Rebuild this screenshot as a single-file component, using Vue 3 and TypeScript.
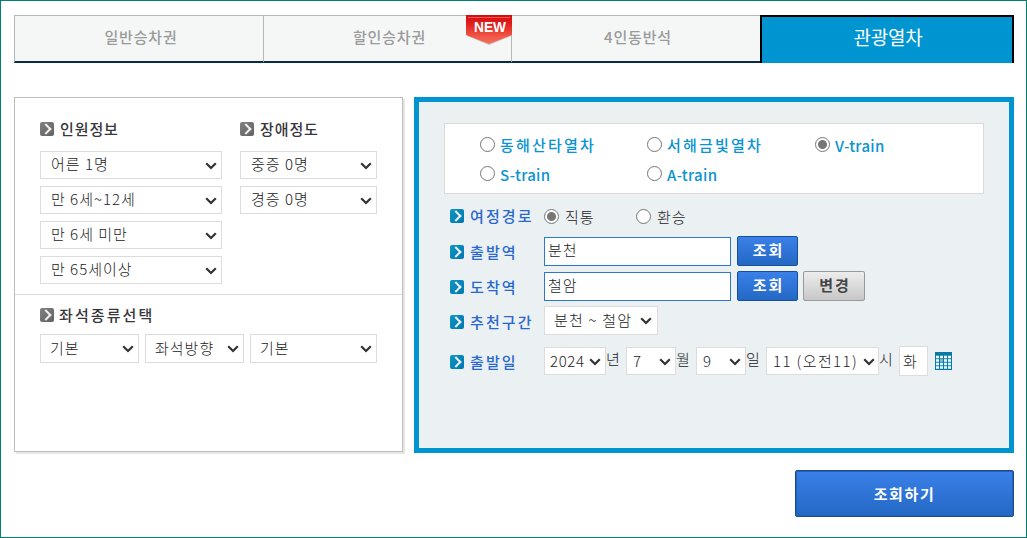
<script setup lang="ts">
import { ref } from 'vue'

const tabs = ['일반승차권', '할인승차권', '4인동반석', '관광열차']
const passengers = ['어른 1명', '만 6세~12세', '만 6세 미만', '만 65세이상']
const disability = ['중증 0명', '경증 0명']
const seats = ['기본', '좌석방향', '기본']
const trains = ['동해산타열차', '서해금빛열차', 'V-train', 'S-train', 'A-train']
const train = ref('V-train')
const route = ref('직통')
const dates = [
  { value: '2024', unit: '년', cls: 'year' },
  { value: '7', unit: '월', cls: 'month' },
  { value: '9', unit: '일', cls: 'day' },
  { value: '11 (오전11)', unit: '시', cls: 'hour' },
]
</script>

<template>
  <main class="page">
    <nav class="tabs">
      <a v-for="(t, i) in tabs" :key="t" class="tab" :class="{ active: i === 3 }">
        <span>{{ t }}</span>
        <svg v-if="i === 1" class="badge" width="46" height="31" viewBox="0 0 46 31">
          <defs>
            <linearGradient id="red" x2="0" y2="1">
              <stop offset="0" stop-color="#d60d10" />
              <stop offset=".3" stop-color="#df1e1e" />
              <stop offset=".7" stop-color="#f05243" />
              <stop offset="1" stop-color="#f8705d" />
            </linearGradient>
          </defs>
          <path d="M1 1h44v20L23 30 1 21z" fill="#999" opacity=".5" />
          <path d="M0 0h46v20L23 29 0 20z" fill="url(#red)" />
          <path d="M2 2.5h42" stroke="#ee5a50" />
          <text x="8" y="17" textLength="32" lengthAdjust="spacingAndGlyphs">NEW</text>
        </svg>
      </a>
    </nav>

    <div class="panels">
      <section class="left">
        <div class="people">
          <div class="col wide">
            <h2><i class="mark" /><span>인원정보</span></h2>
            <div v-for="p in passengers" :key="p" class="select"><span>{{ p }}</span><svg class="chev" viewBox="0 0 12 8"><path d="M1.2 1.2 6 6l4.8-4.8" /></svg></div>
          </div>
          <div class="col narrow">
            <h2><i class="mark" /><span>장애정도</span></h2>
            <div v-for="p in disability" :key="p" class="select"><span>{{ p }}</span><svg class="chev" viewBox="0 0 12 8"><path d="M1.2 1.2 6 6l4.8-4.8" /></svg></div>
          </div>
        </div>
        <div class="seating">
          <h2 class="loose"><i class="mark" /><span>좌석종류선택</span></h2>
          <div class="seats">
            <div v-for="(s, i) in seats" :key="i" class="select"><span>{{ s }}</span><svg class="chev" viewBox="0 0 12 8"><path d="M1.2 1.2 6 6l4.8-4.8" /></svg></div>
          </div>
        </div>
      </section>

      <section class="right">
        <div class="trains">
          <label v-for="t in trains" :key="t" :class="{ latin: t.includes('train') }">
            <i class="radio" :class="{ on: train === t }" @click="train = t" /><span>{{ t }}</span>
          </label>
        </div>

        <div class="row route">
          <div class="label"><i class="mark blue" /><span>여정경로</span></div>
          <label v-for="r in ['직통', '환승']" :key="r" class="way"><i class="radio" :class="{ on: route === r }" @click="route = r" /><span>{{ r }}</span></label>
        </div>
        <div class="row">
          <div class="label"><i class="mark blue" /><span>출발역</span></div>
          <div class="input"><span>분천</span></div>
          <button class="btn"><span>조회</span></button>
        </div>
        <div class="row">
          <div class="label"><i class="mark blue" /><span>도착역</span></div>
          <div class="input"><span>철암</span></div>
          <button class="btn"><span>조회</span></button>
          <button class="btn gray"><span>변경</span></button>
        </div>
        <div class="row">
          <div class="label"><i class="mark blue" /><span>추천구간</span></div>
          <div class="select section"><span>분천 ~ 철암</span><svg class="chev" viewBox="0 0 12 8"><path d="M1.2 1.2 6 6l4.8-4.8" /></svg></div>
        </div>
        <div class="row date">
          <div class="label"><i class="mark blue" /><span>출발일</span></div>
          <template v-for="d in dates" :key="d.unit">
            <div class="select" :class="d.cls"><span>{{ d.value }}</span><svg class="chev" viewBox="0 0 12 8"><path d="M1.2 1.2 6 6l4.8-4.8" /></svg></div>
            <span class="unit">{{ d.unit }}</span>
          </template>
          <div class="weekday">화</div>
          <svg class="cal" width="17" height="18" viewBox="0 0 17 18">
            <path d="M0 0h17v18H0z" fill="#0878a5" />
            <g v-for="r in 4" :key="r">
              <rect v-for="c in 4" :key="c" :x="c * 4 - 3" :y="r * 3.5 + 0.2" width="3" height="2.6" :fill="r === 2 && c === 2 ? '#8fb6c6' : '#e3f4fa'" />
            </g>
          </svg>
        </div>
      </section>
    </div>
    <button class="submit"><span>조회하기</span></button>
  </main>
</template>

<style>
body { background: #fff; }
</style>
<style scoped>
* { box-sizing: border-box; }
.page { width: 1027px; height: 538px; border: 1px solid #008073; padding: 14px 12px 0 13px; font: 15px/20px "Noto Sans CJK KR", sans-serif; color: #222; overflow: hidden; }
.tabs { display: grid; grid-template-columns: 249px 248px 249px 254px; height: 48px; width: 1000px; }
.tab { position: relative; border: solid #b4b8b7; border-width: 1px 0 0 1px; border-bottom: 2px solid #052b49; background: #f5f7f7; color: #9b9b9b; display: flex; align-items: center; justify-content: center; font-weight: 500; letter-spacing: .8px; }
.tab > span { position: relative; top: -2px; left: 2px; }
.tab.active { background: #0095d0; border: 2px solid #000; border-bottom: 0; color: #fff; font-size: 19px; font-weight: 400; letter-spacing: -.2px; }
.tab.active > span { top: -3px; left: 1px; }
.badge { position: absolute; right: 0; top: -1px; margin-right: -1px; z-index: 1; }
.badge text { font: 700 14px "Liberation Sans", sans-serif; fill: #fff; letter-spacing: 0; }
.panels { display: flex; gap: 11px; margin-top: 34px; height: 356px; }
.left { width: 389px; height: 355px; border: 1px solid #bebebe; background: #fff; box-shadow: 2px 2px 0 #e6e6e6; }
.people { display: flex; gap: 18px; padding: 21px 0 0 25px; height: 197px; border-bottom: 1px solid #dcdcdc; }
.wide { width: 182px; }
.narrow { width: 137px; }
h2 { margin: 0; height: 20px; display: flex; align-items: center; gap: 6px; font-size: 15px; line-height: 20px; font-weight: 500; letter-spacing: .9px; color: #38363b; }
h2.loose { letter-spacing: 2.1px; gap: 5px; }
.mark { width: 14px; height: 14px; border-radius: 2px; background: linear-gradient(135deg, #808080, #626262); flex: none; display: flex; align-items: center; justify-content: center; }
.mark::after { content: ""; width: 6px; height: 6px; border: solid #eee; border-width: 2px 2px 0 0; transform: translateX(-1px) rotate(45deg); }
.mark.blue { background: linear-gradient(135deg, #0f95c2, #0077b2); }
.select { height: 28px; border: 1px solid #dcdcdc; background: #fff; display: flex; align-items: center; justify-content: space-between; padding: 0 4px 0 10px; white-space: nowrap; letter-spacing: 1px; font-weight: 300; }
.select > span { position: relative; top: -1px; }
.chev { width: 12px; height: 8px; flex: none; fill: none; stroke: #333; stroke-width: 2.2; position: relative; top: 1px; }
.col .select { margin-top: 7px; }
.col h2 + .select { margin-top: 12px; }
.seating { padding: 10px 0 0 25px; }
.seats { display: flex; gap: 6px; margin-top: 9px; }
.seats .select { width: 99px; height: 29px; padding-left: 9px; }
.seats .chev { top: 0; }
.seats .select:last-child { width: 127px; }
.right { width: 600px; height: 356px; border: 5px solid #0095d0; background: #ebf0f3; padding: 21px 0 0 25px; }
.trains { width: 540px; height: 71px; border: 1px solid #dadada; background: #fff; padding: 8px 0 0 35px; display: grid; grid-template-columns: 167px 168px 150px; grid-template-rows: 29px 29px; }
label { display: flex; align-items: flex-start; gap: 4px; }
.trains label { color: #0a94d1; font-weight: 500; letter-spacing: 2.2px; padding-top: 5px; gap: 5px; }
.trains label span { margin-top: -2px; }
.trains .latin { letter-spacing: .3px; }
.trains .latin span { margin-top: -1px; }
.radio { width: 15px; height: 15px; border: 1.5px solid #767676; border-radius: 50%; background: #fff; flex: none; }
.radio.on { background: radial-gradient(circle, #767676 4px, #fff 5px); }
.row { display: flex; align-items: center; height: 30px; margin: 5px 0 0 6px; }
.row.route { margin: 6px 0 6px 6px; }
.label { width: 94px; display: flex; align-items: center; gap: 6px; color: #2969cc; font-weight: 500; letter-spacing: 2.1px; padding-top: 2px; }
.label span { position: relative; top: 0; }
.way { width: 92px; gap: 6px; letter-spacing: .9px; font-weight: 300; padding-top: 4px; }
.way .radio { margin-top: 2px; }
.input { width: 187px; height: 29px; margin-top: 1px; border: 1px solid #2e77d0; background: #fff; padding: 2px 3px; margin-right: 6px; letter-spacing: 1px; font-weight: 300; }
.btn { width: 61px; height: 30px; padding: 0; border: 1px solid #174f9d; border-radius: 2px; background: linear-gradient(#3a80e8, #2468c4); color: #fff; font: 700 15px/20px "Noto Sans CJK KR", sans-serif; letter-spacing: 2px; }
.btn > span { position: relative; top: -1px; left: 1px; }
.btn.gray { width: 62px; margin-left: 5px; background: linear-gradient(#ededed, #c7c7c7); color: #444; border-color: #999; }
.select.section { width: 114px; height: 29px; padding: 0 5px 0 9px; margin-top: -1px; letter-spacing: 1.2px; }
.section .chev { top: 0; }
.row.date { margin-top: 10px; }
.date .select { padding-left: 6px; }
.date .select > span { top: 0; }
.year { width: 62px; }
.month { width: 50px; }
.day { width: 50px; }
.hour { width: 113px; }
.date .year { padding-left: 5px; letter-spacing: .6px; }
.date .hour { padding-right: 3px; letter-spacing: 1.4px; }
.unit { width: 20px; padding-left: 0; margin-top: -4px; font-weight: 300; }
.weekday { width: 29px; height: 30px; border: 1px solid #dcdcdc; background: #fff; padding: 4px 0 0 3px; font-weight: 300; }
.cal { margin-left: 7px; }
.submit { display: block; margin: 17px 0 0 781px; width: 219px; height: 47px; border: 1px solid #174b93; border-radius: 2px; background: linear-gradient(#3a80e8, #2468c4); box-shadow: inset 0 0 0 1px #2561b5; color: #fff; font: 700 15px/20px "Noto Sans CJK KR", sans-serif; letter-spacing: 1.6px; }
</style>
